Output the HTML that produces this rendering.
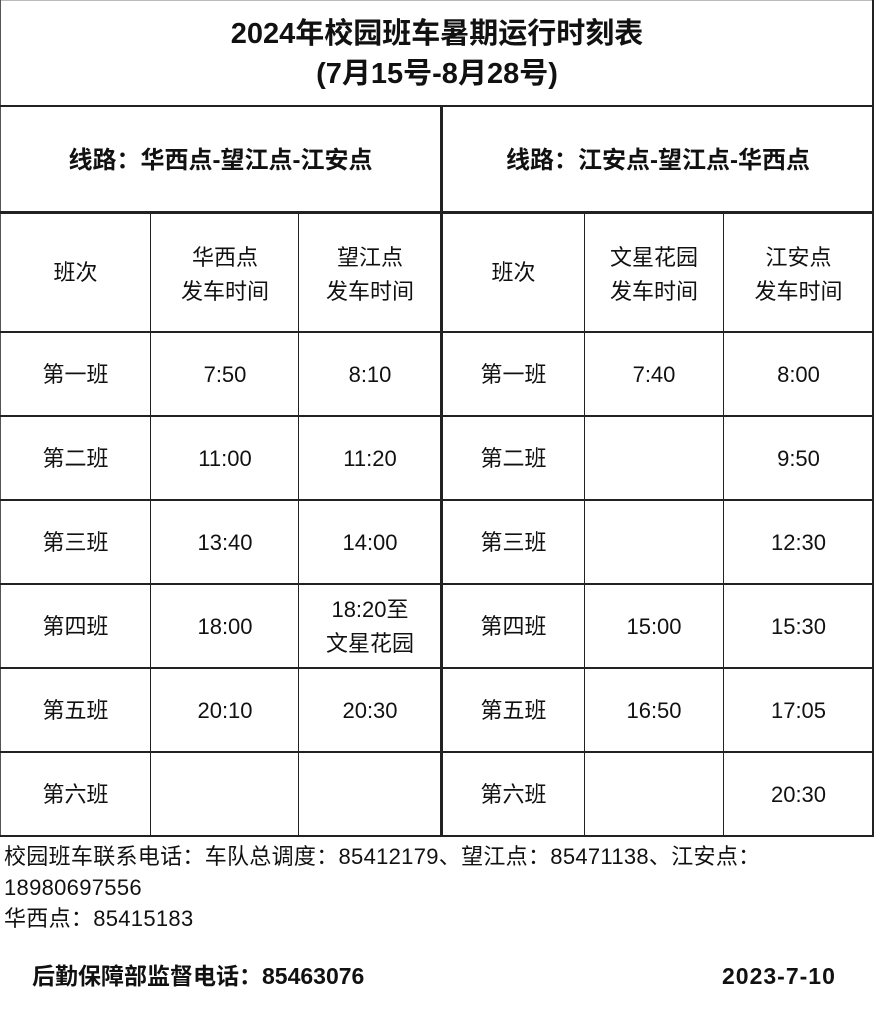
<!DOCTYPE html>
<html><head><meta charset="utf-8"><style>
body{margin:0;width:874px;height:1017px;background:#fff;position:relative;overflow:hidden;font-family:"Liberation Sans","Noto Sans CJK SC",sans-serif;color:#111}
.h{position:absolute;left:0;width:874px;height:2px;background:#222}
.v{position:absolute;width:2px;background:#222}
.t{position:absolute;text-align:center;display:flex;align-items:center;justify-content:center;line-height:34px;font-size:22px}
.b{font-weight:bold}
</style></head><body>
<div class="h" style="top:0;height:1px;background:#bbb"></div>
<div class="v" style="left:0;top:0;height:837px;width:1px;background:#555"></div>
<div class="v" style="left:872px;top:0;height:837px"></div>
<div class="h" style="top:105px"></div>
<div class="h" style="top:211px;height:3px"></div>
<div class="h" style="top:331px"></div>
<div class="h" style="top:415px"></div>
<div class="h" style="top:499px"></div>
<div class="h" style="top:583px"></div>
<div class="h" style="top:667px"></div>
<div class="h" style="top:751px"></div>
<div class="h" style="top:835px"></div>
<div class="v" style="left:440px;top:106px;height:731px;width:3px"></div>
<div class="v" style="left:150px;top:212px;height:625px;width:1px"></div>
<div class="v" style="left:298px;top:212px;height:625px;width:1px"></div>
<div class="v" style="left:584px;top:212px;height:625px;width:1px"></div>
<div class="v" style="left:723px;top:212px;height:625px;width:1px"></div>

<div class="t b" style="left:0;top:14px;width:874px;font-size:29px;line-height:40px;flex-direction:column">2024年校园班车暑期运行时刻表<br>(7月15号-8月28号)</div>
<div class="t b" style="left:0;top:108px;width:441px;height:106px;font-size:24px">线路：华西点-望江点-江安点</div>
<div class="t b" style="left:443px;top:108px;width:430px;height:106px;font-size:24px">线路：江安点-望江点-华西点</div>

<div class="t" style="left:0;top:213px;width:151px;height:119px">班次</div>
<div class="t" style="left:151px;top:215px;width:148px;height:119px">华西点<br>发车时间</div>
<div class="t" style="left:299px;top:215px;width:142px;height:119px">望江点<br>发车时间</div>
<div class="t" style="left:443px;top:213px;width:141px;height:119px">班次</div>
<div class="t" style="left:585px;top:215px;width:138px;height:119px">文星花园<br>发车时间</div>
<div class="t" style="left:724px;top:215px;width:149px;height:119px">江安点<br>发车时间</div>

<div class="t" style="left:0;top:333px;width:151px;height:84px">第一班</div>
<div class="t" style="left:151px;top:333px;width:148px;height:84px">7:50</div>
<div class="t" style="left:299px;top:333px;width:142px;height:84px">8:10</div>
<div class="t" style="left:443px;top:333px;width:141px;height:84px">第一班</div>
<div class="t" style="left:585px;top:333px;width:138px;height:84px">7:40</div>
<div class="t" style="left:724px;top:333px;width:149px;height:84px">8:00</div>

<div class="t" style="left:0;top:417px;width:151px;height:84px">第二班</div>
<div class="t" style="left:151px;top:417px;width:148px;height:84px">11:00</div>
<div class="t" style="left:299px;top:417px;width:142px;height:84px">11:20</div>
<div class="t" style="left:443px;top:417px;width:141px;height:84px">第二班</div>
<div class="t" style="left:724px;top:417px;width:149px;height:84px">9:50</div>

<div class="t" style="left:0;top:501px;width:151px;height:84px">第三班</div>
<div class="t" style="left:151px;top:501px;width:148px;height:84px">13:40</div>
<div class="t" style="left:299px;top:501px;width:142px;height:84px">14:00</div>
<div class="t" style="left:443px;top:501px;width:141px;height:84px">第三班</div>
<div class="t" style="left:724px;top:501px;width:149px;height:84px">12:30</div>

<div class="t" style="left:0;top:585px;width:151px;height:84px">第四班</div>
<div class="t" style="left:151px;top:585px;width:148px;height:84px">18:00</div>
<div class="t" style="left:299px;top:585px;width:142px;height:84px">18:20至<br>文星花园</div>
<div class="t" style="left:443px;top:585px;width:141px;height:84px">第四班</div>
<div class="t" style="left:585px;top:585px;width:138px;height:84px">15:00</div>
<div class="t" style="left:724px;top:585px;width:149px;height:84px">15:30</div>

<div class="t" style="left:0;top:669px;width:151px;height:84px">第五班</div>
<div class="t" style="left:151px;top:669px;width:148px;height:84px">20:10</div>
<div class="t" style="left:299px;top:669px;width:142px;height:84px">20:30</div>
<div class="t" style="left:443px;top:669px;width:141px;height:84px">第五班</div>
<div class="t" style="left:585px;top:669px;width:138px;height:84px">16:50</div>
<div class="t" style="left:724px;top:669px;width:149px;height:84px">17:05</div>

<div class="t" style="left:0;top:753px;width:151px;height:84px">第六班</div>
<div class="t" style="left:443px;top:753px;width:141px;height:84px">第六班</div>
<div class="t" style="left:724px;top:753px;width:149px;height:84px">20:30</div>

<div style="position:absolute;left:4px;top:841px;width:870px;font-size:22px;line-height:31px;color:#111;white-space:nowrap;letter-spacing:0.3px">校园班车联系电话：车队总调度：85412179、望江点：85471138、江安点：<br>18980697556<br>华西点：85415183</div>
<div class="b" style="position:absolute;left:32px;top:961px;font-size:23px;line-height:30px">后勤保障部监督电话：85463076</div>
<div class="b" style="position:absolute;left:722px;top:961px;font-size:23px;line-height:30px;letter-spacing:1px">2023-7-10</div>
</body></html>
